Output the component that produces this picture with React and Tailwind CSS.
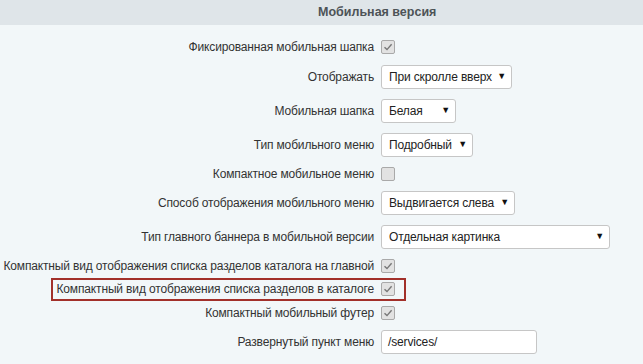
import React from "react";

function Check({ checked = true }) {
  return (
    <span className="inline-flex h-[14px] w-[14px] items-center justify-center rounded-[2px] border border-[#a9a9a9] bg-[#e2e2e2]">
      {checked && (
        <svg width="10" height="10" viewBox="0 0 10 10">
          <path d="M1.5 5.2 L4 7.6 L8.6 2.2" fill="none" stroke="#777" strokeWidth="1.4" />
        </svg>
      )}
    </span>
  );
}

function Select({ value, w }) {
  return (
    <div
      className={`flex h-[24px] items-center justify-between whitespace-nowrap rounded-[3px] border border-[#c6c6c6] bg-white pl-[7px] pr-[5px] text-[12px] text-[#222] ${w}`}
    >
      <span>{value}</span>
      <span className="text-[9px] text-[#111]">▼</span>
    </div>
  );
}

function Row({ label, h, children }) {
  return (
    <div className={`flex items-center ${h}`}>
      <div className="w-[381px] shrink-0 pr-[7px] text-right whitespace-nowrap">{label}</div>
      <div className="flex items-center">{children}</div>
    </div>
  );
}

export default function App() {
  return (
    <div
      className="h-[364px] w-[643px] overflow-hidden bg-[#f2f7f9] text-[12px] tracking-[-0.15px] text-[#333]"
      style={{ fontFamily: '"Liberation Sans", Arial, sans-serif' }}
    >
      <div className="flex h-[25px] items-center bg-[#dfe5e9] pl-[318px] text-[12.5px] font-bold tracking-normal text-[#4d5357]">
        Мобильная версия
      </div>
      <div className="pt-[7px]">
        <Row label="Фиксированная мобильная шапка" h="h-[29px]">
          <Check />
        </Row>
        <Row label="Отображать" h="h-[32px]">
          <Select value="При скролле вверх" w="w-[131px]" />
        </Row>
        <Row label="Мобильная шапка" h="h-[35px]">
          <Select value="Белая" w="w-[75px]" />
        </Row>
        <Row label="Тип мобильного меню" h="h-[33px]">
          <Select value="Подробный" w="w-[92px]" />
        </Row>
        <Row label="Компактное мобильное меню" h="h-[26px]">
          <Check checked={false} />
        </Row>
        <Row label="Способ отображения мобильного меню" h="h-[31px]">
          <Select value="Выдвигается слева" w="w-[134px]" />
        </Row>
        <Row label="Тип главного баннера в мобильной версии" h="h-[37px]">
          <Select value="Отдельная картинка" w="w-[229px]" />
        </Row>
        <Row label="Компактный вид отображения списка разделов каталога на главной" h="h-[22px]">
          <Check />
        </Row>
        <div className="flex h-[24px] items-center">
          <div className="ml-[51px] flex h-[23px] w-[355px] items-center justify-end border-2 border-[#a2302a] pr-[9px]">
            <span className="pr-[7px] whitespace-nowrap">
              Компактный вид отображения списка разделов в каталоге
            </span>
            <Check />
          </div>
        </div>
        <Row label="Компактный мобильный футер" h="h-[24px]">
          <Check />
        </Row>
        <Row label="Развернутый пункт меню" h="h-[34px]">
          <div className="flex h-[24px] w-[156px] items-center rounded-[3px] border border-[#c6c6c6] bg-white pl-[6px] text-[12px] text-[#222]">
            /services/
          </div>
        </Row>
      </div>
    </div>
  );
}
